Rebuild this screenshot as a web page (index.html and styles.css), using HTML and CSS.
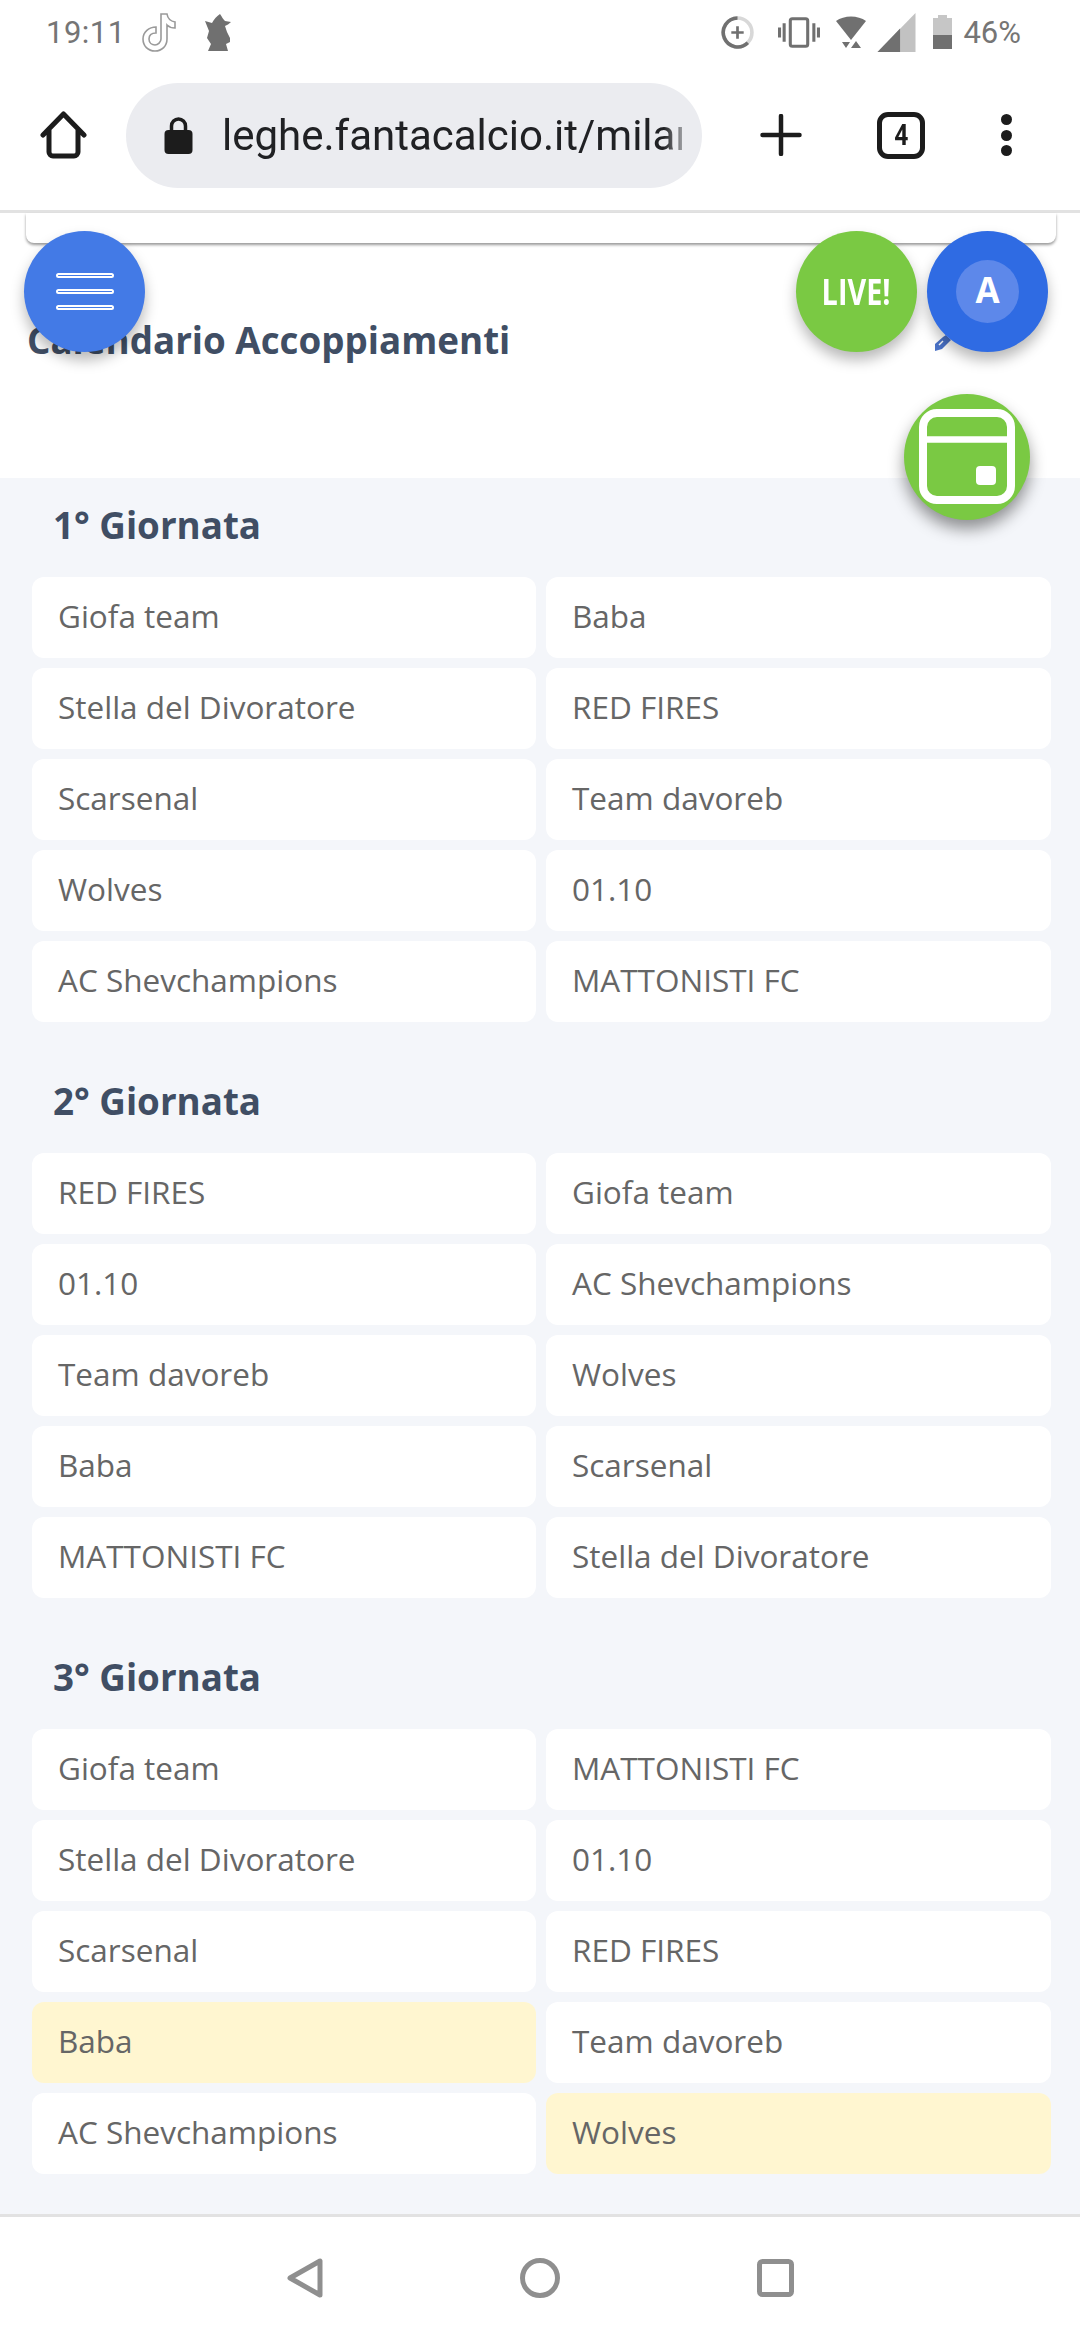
FILE: index.html
```html
<!DOCTYPE html>
<html lang="it">
<head>
<meta charset="utf-8">
<title>Calendario Accoppiamenti</title>
<link rel="stylesheet" href="styles.css">
</head>
<body>
<div class="app">
  <div class="status">
    <div class="status-left">
      <span class="time">19:11</span>
      <svg class="ic-tiktok" viewBox="0 0 34 39"><path d="M19 1h6c.6 4 3 7 8 8v6c-3 0-6-1-8-3v14c0 7-5 12-12 12S1 33 1 26s6-12 13-12v6c-4 0-7 2-7 6s3 6 6 6 6-3 6-6z" fill="#fff" stroke="#9a9a9a" stroke-width="1.6"/></svg>
      <svg class="ic-wizard" viewBox="0 0 26 37"><path d="M15 0C17 3 18 5 20 7L26 8C24 10 22 11 20 12L22 18L25 24L25 28L21 30L23 37L3 37L6 30L2 24L4 17L0 7L7 9C9 5 12 2 15 0Z" fill="#707070"/></svg>
    </div>
    <div class="status-right">
      <svg class="ic-saver" viewBox="0 0 32 32"><circle cx="16" cy="16" r="14" fill="none" stroke="#d8d8d8" stroke-width="3.5"/><path d="M16 2A14 14 0 1 0 26 26" fill="none" stroke="#707070" stroke-width="3.5"/><path d="M16 10v12M10 16h12" stroke="#707070" stroke-width="2.6"/></svg>
      <svg class="ic-vibrate" viewBox="0 0 41 30"><rect x="12" y="1.5" width="17" height="27" rx="2" fill="none" stroke="#707070" stroke-width="3"/><path d="M6 6v18M1.500 10v10M35 6v18M39.500 10v10" stroke="#707070" stroke-width="3"/></svg>
      <svg class="ic-wifi" viewBox="0 0 30 32"><path d="M0 5C8-1 22-1 30 5L15 24Z" fill="#707070"/><path d="M6 26h8l-4 6zM20 25l5 7h-10z" fill="#707070"/></svg>
      <svg class="ic-signal" viewBox="0 0 37 38"><path d="M37 0V38H0Z" fill="#c2c2c2"/><path d="M22 15V38H0Z" fill="#707070"/></svg>
      <svg class="ic-battery" viewBox="0 0 19 34"><path d="M5 0h9v3h5v31H0V3h5z" fill="#c6c6c6"/><path d="M0 20h19v14H0z" fill="#707070"/></svg>
      <span class="pct">46%</span>
    </div>
  </div>

  <div class="toolbar">
    <svg class="ic-home" viewBox="0 0 47 48"><path d="M3 24L23.500 3L44 24M9 19V41a4 4 0 0 0 4 4H34a4 4 0 0 0 4-4V19" fill="none" stroke="#1c1c1c" stroke-width="5" stroke-linecap="round" stroke-linejoin="round"/></svg>
    <div class="pill">
      <svg class="ic-lock" viewBox="0 0 28 37"><path d="M7 15V9a7 7 0 0 1 14 0v6" fill="none" stroke="#1c1c1c" stroke-width="3.500"/><rect y="13" width="28" height="24" rx="4" fill="#1c1c1c"/></svg>
      <div class="url">leghe.fantacalcio.it/milan</div>
    </div>
    <svg class="ic-plus" viewBox="0 0 41 42"><path d="M20.500 2v38M2 21h37" stroke="#1c1c1c" stroke-width="4.500" stroke-linecap="round"/></svg>
    <div class="tabs"><span class="tabs-num">4</span></div>
    <div class="dots"><span></span><span></span><span></span></div>
  </div>

  <main class="page">
    <div class="card-end"></div>
    <h1 class="title">Calendario Accoppiamenti</h1>
    <section class="rounds">
      <div class="round">
        <h2>1° Giornata</h2>
        <div class="grid">
          <div class="cell">Giofa team</div><div class="cell">Baba</div>
          <div class="cell">Stella del Divoratore</div><div class="cell">RED FIRES</div>
          <div class="cell">Scarsenal</div><div class="cell">Team davoreb</div>
          <div class="cell">Wolves</div><div class="cell">01.10</div>
          <div class="cell">AC Shevchampions</div><div class="cell">MATTONISTI FC</div>
        </div>
      </div>
      <div class="round">
        <h2>2° Giornata</h2>
        <div class="grid">
          <div class="cell">RED FIRES</div><div class="cell">Giofa team</div>
          <div class="cell">01.10</div><div class="cell">AC Shevchampions</div>
          <div class="cell">Team davoreb</div><div class="cell">Wolves</div>
          <div class="cell">Baba</div><div class="cell">Scarsenal</div>
          <div class="cell">MATTONISTI FC</div><div class="cell">Stella del Divoratore</div>
        </div>
      </div>
      <div class="round">
        <h2>3° Giornata</h2>
        <div class="grid">
          <div class="cell">Giofa team</div><div class="cell">MATTONISTI FC</div>
          <div class="cell">Stella del Divoratore</div><div class="cell">01.10</div>
          <div class="cell">Scarsenal</div><div class="cell">RED FIRES</div>
          <div class="cell mine">Baba</div><div class="cell">Team davoreb</div>
          <div class="cell">AC Shevchampions</div><div class="cell mine">Wolves</div>
        </div>
      </div>
    </section>
  </main>

  <nav class="sysnav">
    <svg class="ic-back" viewBox="0 0 36 40"><path d="M33 3V37L3 20Z" fill="none" stroke="#8f8f8f" stroke-width="5" stroke-linejoin="round"/></svg>
    <svg class="ic-circle" viewBox="0 0 40 40"><circle cx="20" cy="20" r="17.500" fill="none" stroke="#8f8f8f" stroke-width="5"/></svg>
    <svg class="ic-square" viewBox="0 0 37 38"><rect x="2.500" y="2.500" width="32" height="33" rx="3" fill="none" stroke="#8f8f8f" stroke-width="5"/></svg>
  </nav>

  <svg class="pencil" viewBox="0 0 18 18"><path d="M0 11L8 4L11 2L16 7L7 16L0 18Z" fill="#4a72c8"/><path d="M4 12L8 8" stroke="#fff" stroke-width="1.500"/></svg>
  <button class="fab fab-menu" aria-label="Menu"><span></span><span></span><span></span></button>
  <button class="fab fab-live"><span class="live-text">LIVE!</span></button>
  <button class="fab fab-user"><span class="avatar">A</span></button>
  <button class="fab fab-cal" aria-label="Calendario">
    <svg class="ic-cal" viewBox="0 0 96 96"><rect x="4" y="4" width="88" height="87" rx="14" fill="none" stroke="#fff" stroke-width="8"/><path d="M4 30.500h88" stroke="#fff" stroke-width="6.500"/><rect x="57" y="57" width="20" height="19" rx="4" fill="#fff"/></svg>
  </button>
</div>
</body>
</html>
```
FILE: styles.css
```css
* { box-sizing: border-box; }
html, body { margin: 0; padding: 0; }
body { background: #fff; font-family: "Open Sans", sans-serif; }

.app {
  position: relative;
  width: 1080px;
  height: 2340px;
  overflow: hidden;
  display: flex;
  flex-direction: column;
}

/* status bar */
.status {
  height: 70px;
  display: flex;
  justify-content: space-between;
  align-items: flex-start;
  padding: 12px 59px 0 46px;
  font-family: Roboto, sans-serif;
  color: #757575;
}
.status-left, .status-right { display: flex; align-items: center; height: 40px; }
.time { font-size: 31px; letter-spacing: .5px; }
.pct { font-size: 31px; margin-left: 11px; }
.status svg { display: block; flex: none; }
.ic-tiktok { width: 34px; height: 39px; margin-left: 16px; }
.ic-wizard { width: 26px; height: 37px; margin-left: 29px; }
.ic-saver { width: 33px; height: 33px; }
.ic-vibrate { width: 42px; height: 31px; margin-left: 24px; }
.ic-wifi { width: 30px; height: 32px; margin-left: 16px; }
.ic-signal { width: 39px; height: 39px; margin-left: 11px; }
.ic-battery { width: 19px; height: 34px; margin-left: 17px; }

/* browser toolbar */
.toolbar {
  height: 143px;
  display: flex;
  align-items: center;
  padding: 0 0 10px 40px;
  border-bottom: 3px solid #e2e2e2;
}
.toolbar svg { display: block; flex: none; }
.ic-home { width: 47px; height: 48px; }
.pill {
  width: 576px;
  height: 105px;
  margin-left: 39px;
  padding-left: 38px;
  background: #ebecf0;
  border-radius: 53px;
  display: flex;
  align-items: center;
}
.ic-lock { width: 29px; height: 37px; }
.url {
  width: 460px;
  margin-left: 29px;
  overflow: hidden;
  white-space: nowrap;
  font-family: Roboto, sans-serif;
  font-size: 42px;
  color: #202124;
  -webkit-mask-image: linear-gradient(to right, #000 96%, rgba(0,0,0,.4) 100%);
  mask-image: linear-gradient(to right, #000 96%, rgba(0,0,0,.4) 100%);
}
.ic-plus { width: 42px; height: 42px; margin-left: 58px; }
.tabs {
  width: 48px;
  height: 47px;
  margin-left: 75px;
  border: 5px solid #1c1c1c;
  border-radius: 11px;
  display: flex;
  align-items: center;
  justify-content: center;
  font-family: Roboto, sans-serif;
  font-weight: 700;
  font-size: 29px;
  color: #1c1c1c;
}
.tabs-num { display: inline-block; transform: scaleX(.85); }
.dots {
  width: 11px;
  margin-left: 76px;
  display: flex;
  flex-direction: column;
  gap: 4.500px;
}
.dots span { display: block; width: 11px; height: 11px; border-radius: 50%; background: #1c1c1c; }

/* page */
.page { flex: 1; display: flex; flex-direction: column; min-height: 0; }
.card-end {
  height: 30px;
  margin: 0 24px 0 26px;
  background: #fff;
  border-radius: 0 0 8px 8px;
  box-shadow: 0 2px 3px rgba(0,0,0,.4);
}
.title {
  height: 235px;
  margin: 0;
  padding: 65px 0 0 27px;
  font-size: 36.75px;
  line-height: 64px;
  font-weight: 700;
  color: #404e64;
}
.rounds {
  flex: 1;
  background: #f4f6fa;
  padding: 0 29px 0 32px;
  display: flex;
  flex-direction: column;
  gap: 32px;
}
.round h2 {
  height: 94px;
  margin: 0 0 5px;
  padding-left: 21px;
  font-size: 36.75px;
  line-height: 94px;
  font-weight: 700;
  color: #404e64;
}
.grid {
  display: grid;
  grid-template-columns: 504px 505px;
  column-gap: 10px;
  row-gap: 10px;
}
.cell {
  height: 81px;
  line-height: 78.5px;
  padding-left: 26px;
  background: #fff;
  border-radius: 12px;
  font-size: 31.5px;
  color: #666;
}
.cell.mine { background: #fff6d0; }

/* system nav */
.sysnav {
  height: 126px;
  border-top: 3px solid #e2e2e2;
  background: #fff;
  display: flex;
  justify-content: center;
  align-items: center;
  gap: 197px;
  padding-bottom: 2px;
}
.ic-back { width: 36px; height: 40px; }
.ic-circle { width: 40px; height: 40px; }
.ic-square { width: 37px; height: 38px; }

/* floating buttons */
.pencil { position: absolute; left: 935px; top: 333px; width: 18px; height: 18px; }
.fab {
  position: absolute;
  padding: 0;
  border: 0;
  border-radius: 50%;
  width: 121px;
  height: 121px;
  top: 231px;
  display: flex;
  align-items: center;
  justify-content: center;
  box-shadow: 0 8px 14px rgba(0,0,0,.28);
  color: #fff;
  font-family: "Open Sans", sans-serif;
}
.fab-menu {
  left: 24px;
  background: #437ae6;
  flex-direction: column;
  gap: 11px;
}
.fab-menu span {
  display: block;
  width: 58px;
  height: 5px;
  background: #437ae6;
  border: 2px solid #fff;
  border-radius: 3px;
}
.fab-live { left: 796px; background: #7ac943; }
.live-text {
  display: inline-block;
  font-size: 36px;
  font-weight: 700;
  transform: scaleX(.8);
}
.fab-user { left: 927px; background: #2f6be3; }
.avatar {
  width: 63px;
  height: 63px;
  border-radius: 50%;
  background: #5d88ea;
  font-size: 35px;
  font-weight: 700;
  line-height: 60px;
  text-align: center;
}
.fab-cal {
  left: 904px;
  top: 394px;
  width: 126px;
  height: 126px;
  background: #7ac943;
  box-shadow: 0 9px 16px rgba(0,0,0,.42);
}
.ic-cal { width: 96px; height: 96px; display: block; }
```
